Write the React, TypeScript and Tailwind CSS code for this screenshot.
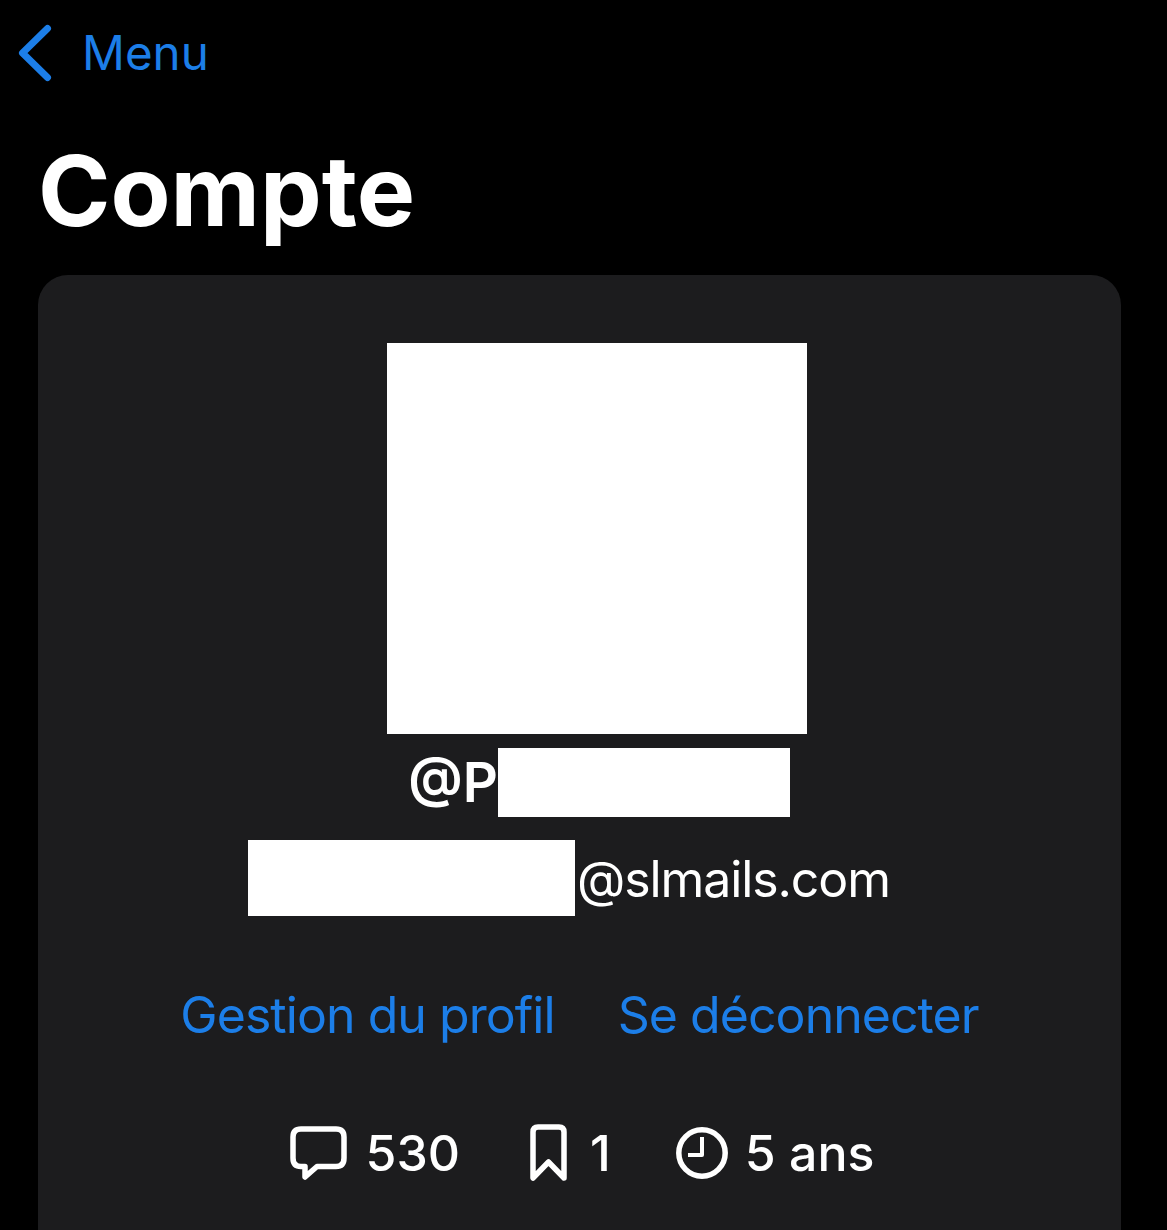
function BackChevron() {
  return (
    <svg width="34" height="58" viewBox="0 0 34 58" fill="none" stroke="#1c7ee8" strokeWidth="7" strokeLinecap="round" strokeLinejoin="round">
      <path d="M29.5 4.5L4.5 29L29.5 53.5" />
    </svg>
  );
}

function CommentIcon() {
  return (
    <svg width="57" height="54" viewBox="0 0 57 54" fill="none" stroke="white" strokeWidth="5.5" strokeLinejoin="round" strokeLinecap="round">
      <path d="M11 3H46Q54 3 54 11V32Q54 40.5 46 40.5H27L15 51V40.5H11Q3 40.5 3 32V11Q3 3 11 3Z" />
    </svg>
  );
}

function BookmarkIcon() {
  return (
    <svg width="37" height="57" viewBox="0 0 37 57" fill="none" stroke="white" strokeWidth="5.5" strokeLinejoin="round" strokeLinecap="round">
      <path d="M3 54V8Q3 3 8 3H29Q34 3 34 8V54L18.5 38Z" />
    </svg>
  );
}

function ClockIcon() {
  return (
    <svg width="52" height="52" viewBox="0 0 52 52" fill="none" stroke="white" strokeWidth="5.5" strokeLinejoin="round">
      <circle cx="26" cy="26" r="23.2" />
      <path d="M26 10V28H12" strokeWidth="4" />
    </svg>
  );
}

export default function App() {
  return (
    <div className="h-[1230px] overflow-hidden bg-black font-['Inter',sans-serif] text-white">
      <div className="flex h-[107px] items-center pl-[18px] pb-[1px] text-[#1c7ee8]">
        <BackChevron />
        <span className="ml-[30px] text-[47.5px] leading-none">Menu</span>
      </div>
      <h1 className="ml-[38px] h-[168px] text-[98px] leading-[168px] font-bold">Compte</h1>

      <div className="ml-[38px] mr-[46px] flex h-[955px] flex-col items-center rounded-t-[30px] bg-[#1c1c1e] pt-[68px]">
        <div className="ml-[35px] h-[391px] w-[420px] bg-white" />

        <div className="mt-[14px] ml-[39px] flex h-[69px] items-center text-[54.5px] font-semibold">
          <span>@P</span>
          <div className="h-[69px] w-[292px] bg-white" />
        </div>

        <div className="mt-[23px] -ml-[21px] flex h-[76px] items-center text-[50px] tracking-[-1.1px]">
          <div className="h-[76px] w-[327px] bg-white" />
          <span className="ml-[2px] pt-[2px]">@slmails.com</span>
        </div>

        <div className="mt-[74px] flex gap-[63px] text-[50px] leading-none tracking-[-0.95px] text-[#1c7ee8]">
          <span>Gestion du profil</span>
          <span>Se déconnecter</span>
        </div>

        <div className="mt-[84px] ml-[5px] flex items-center text-[50px] font-[550] leading-none">
          <div className="flex items-center gap-[19px]">
            <CommentIcon />
            <span>530</span>
          </div>
          <div className="ml-[70px] flex items-center gap-[23px]">
            <BookmarkIcon />
            <span>1</span>
          </div>
          <div className="ml-[65px] flex items-center gap-[17px]">
            <ClockIcon />
            <span>5 ans</span>
          </div>
        </div>
      </div>
    </div>
  );
}
